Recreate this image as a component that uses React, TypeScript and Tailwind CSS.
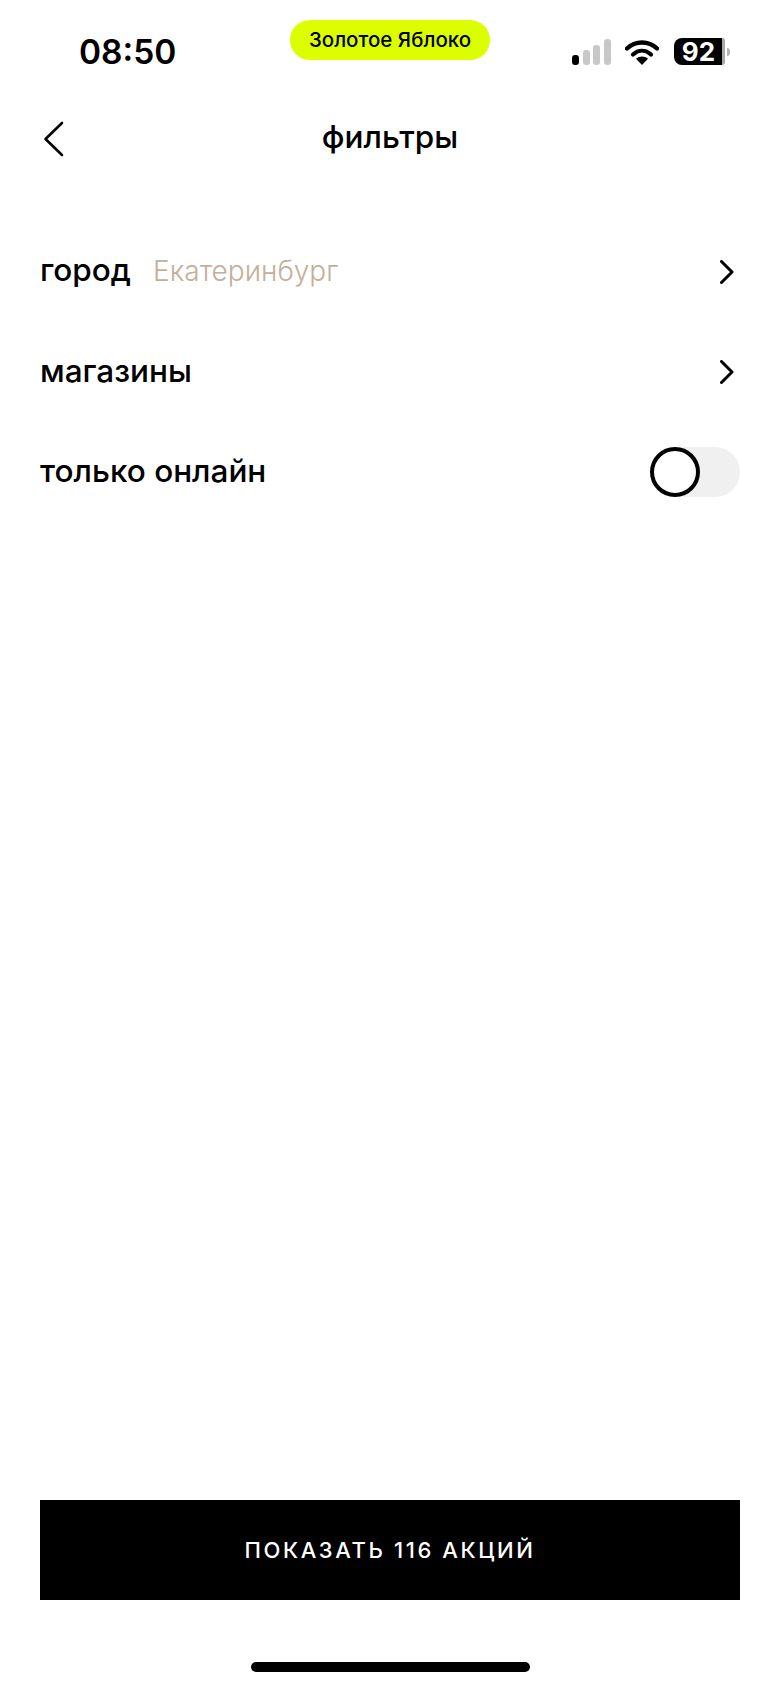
const font = "font-['Inter','Noto_Sans',sans-serif]"

function Chevron() {
  return (
    <svg width="14" height="24" viewBox="0 0 14 24" fill="none" className="shrink-0">
      <path d="M1.5 1.5L12 12L1.5 22.5" stroke="#000" strokeWidth="3" strokeLinecap="round" strokeLinejoin="round" />
    </svg>
  )
}

function StatusIcons() {
  return (
    <div className="flex items-center">
      <svg width="40" height="26" viewBox="0 0 40 26" className="mr-[14px]">
        <rect x="1" y="16" width="7" height="10" rx="3" fill="#000" />
        <rect x="12" y="11" width="7" height="15" rx="3" fill="#c8c8c8" />
        <rect x="22" y="6" width="7" height="20" rx="3" fill="#c8c8c8" />
        <rect x="33" y="0" width="7" height="26" rx="3" fill="#c8c8c8" />
      </svg>
      <svg width="34" height="26" viewBox="0 0 34 26" fill="none" className="mr-[15px]">
        <path d="M2 9.5C10.5 1.5 23.5 1.5 32 9.5" stroke="#000" strokeWidth="4.4" strokeLinecap="round" />
        <path d="M8 15.5C13.5 10.5 20.5 10.5 26 15.5" stroke="#000" strokeWidth="4.2" strokeLinecap="round" />
        <path d="M17 26L11 19.8C14.5 16.8 19.5 16.8 23 19.8Z" fill="#000" />
      </svg>
      <div className="flex h-[27px] w-[48px] items-center justify-center rounded-l-[8px] bg-black pl-[1px] text-[26px] font-bold text-white">
        92
      </div>
      <div className="h-[27px] w-[3px] rounded-r-[4px] bg-[#a8a8a8]" />
      <div className="ml-[2px] h-[8px] w-[3px] rounded-r-[3px] bg-[#b5b5b5]" />
    </div>
  )
}

function Row({ label, value, children }: { label: string; value?: string; children?: React.ReactNode }) {
  return (
    <div className="flex h-[100px] items-center justify-between">
      <div className="flex items-baseline pb-[3px]">
        <span className="text-[31.5px] leading-[44px] font-[550] text-black">{label}</span>
        {value && <span className="ml-[22px] text-[28px] leading-[44px] font-light text-[#c4ae99]">{value}</span>}
      </div>
      {children}
    </div>
  )
}

export default function App() {
  return (
    <div className={`flex h-[1688px] w-[780px] flex-col bg-white ${font}`}>
      <div className="flex h-[96px] items-start pl-[79px] pr-[50px]">
        <span className="mt-[31px] w-[211px] text-[33.5px] leading-[42px] font-semibold text-black">08:50</span>
        <div className="mt-[20px] flex h-[40px] w-[200px] items-center justify-center rounded-full bg-[#dcff00] text-[20.5px] font-medium text-black">
          Золотое Яблоко
        </div>
        <div className="mt-[38px] ml-auto">
          <StatusIcons />
        </div>
      </div>

      <div className="relative flex h-[84px] items-center justify-center pb-[3px]">
        <svg width="21" height="36" viewBox="0 0 21 36" fill="none" className="absolute top-[25px] left-[43px]">
          <path d="M19 2L2.5 18L19 34" stroke="#000" strokeWidth="2.6" strokeLinecap="round" strokeLinejoin="round" />
        </svg>
        <span className="text-[31.5px] font-[550] text-black">фильтры</span>
      </div>

      <div className="mt-[42px] flex flex-col px-[40px]">
        <Row label="город" value="Екатеринбург">
          <div className="pr-[6px]"><Chevron /></div>
        </Row>
        <Row label="магазины">
          <div className="pr-[6px]"><Chevron /></div>
        </Row>
        <Row label="только онлайн">
          <div className="h-[50px] w-[90px] rounded-full bg-[#f0f0f0]">
            <div className="h-[50px] w-[50px] rounded-full border-4 border-black bg-white" />
          </div>
        </Row>
      </div>

      <div className="mt-auto px-[40px]">
        <button className="flex h-[100px] w-full items-center justify-center bg-black text-[22px] font-medium tracking-[2.6px] text-white">
          ПОКАЗАТЬ 116 АКЦИЙ
        </button>
        <div className="flex h-[88px] items-start justify-center pt-[62px]">
          <div className="h-[10px] w-[279px] rounded-full bg-black" />
        </div>
      </div>
    </div>
  )
}
